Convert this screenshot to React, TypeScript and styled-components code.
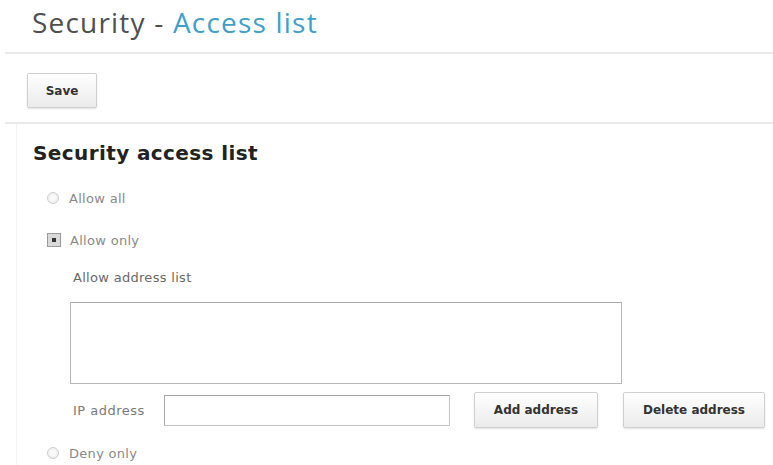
import styled, { createGlobalStyle } from 'styled-components';

const GlobalStyle = createGlobalStyle`
  html, body {
    margin: 0;
    padding: 0;
    background: #ffffff;
  }
  body {
    font-family: 'DejaVu Sans', Verdana, sans-serif;
    color: #555;
  }
`;

const Page = styled.div`
  width: 773px;
  height: 465px;
  overflow: hidden;
  background: #fff;
`;

const Header = styled.header`
  box-sizing: border-box;
  height: 52px;
  padding: 5px 0 0 32px;
`;

const Title = styled.h1`
  margin: 0;
  font-family: 'Open Sans', 'Noto Sans', sans-serif;
  font-weight: 400;
  font-size: 28px;
  line-height: 34px;
  color: #505050;
  letter-spacing: 1.2px;
`;

const TitleAccent = styled.span`
  color: #41a0ca;
`;

const Rule = styled.hr`
  margin: 0 0 0 5px;
  border: 0;
  height: 2px;
  background: #e9e9e9;
`;

const Toolbar = styled.div`
  box-sizing: border-box;
  height: 68px;
  padding: 19px 0 0 27px;
`;

const Button = styled.button<{ $width: number }>`
  width: ${(p) => p.$width}px;
  height: ${(p) => (p.$width < 80 ? 35 : 36)}px;
  padding: 0;
  border: 1px solid #d0d0d0;
  border-radius: 2px;
  background: linear-gradient(#ffffff, #ebebeb);
  box-shadow: 0 1px 2px rgba(0, 0, 0, 0.12);
  font-family: 'DejaVu Sans', Verdana, sans-serif;
  font-weight: 700;
  font-size: 12px;
  color: #333;
  cursor: pointer;
`;

const Section = styled.section`
  margin-left: 16px;
  padding: 17px 0 20px 16px;
  border-left: 1px solid #f3f3f3;
  display: flex;
  flex-direction: column;
`;

const Heading = styled.h2`
  margin: 0 0 23px;
  font-family: 'DejaVu Sans', Verdana, sans-serif;
  font-weight: 700;
  font-size: 20px;
  line-height: 24px;
  letter-spacing: 0.4px;
  color: #222;
`;

const Option = styled.label<{ $gap?: number }>`
  display: flex;
  align-items: center;
  height: 20px;
  margin-top: ${(p) => p.$gap ?? 0}px;
  padding-left: 14px;
  font-size: 13px;
  letter-spacing: 0.3px;
  color: #8a8a8a;
`;

const Radio = styled.span`
  width: 10px;
  height: 10px;
  margin-right: 10px;
  border: 1px solid #cfcfcf;
  border-radius: 50%;
  background: radial-gradient(circle, #fafafa 30%, #e6e6e6 100%);
`;

const CheckedBox = styled.span`
  width: 12px;
  height: 12px;
  margin-right: 9px;
  border: 1px solid #9a9a9a;
  background: #dadada;
  display: flex;
  align-items: center;
  justify-content: center;

  &::after {
    content: '';
    width: 4px;
    height: 4px;
    background: #333;
  }
`;

const Nested = styled.div`
  padding-left: 38px;
  display: flex;
  flex-direction: column;
`;

const FieldLabel = styled.div`
  height: 20px;
  line-height: 20px;
  margin: 18px 0 14px 2px;
  font-size: 13px;
  letter-spacing: 0.3px;
  color: #6a6a6a;
`;

const AddressList = styled.textarea`
  box-sizing: border-box;
  width: 552px;
  height: 82px;
  margin: 0 0 0 -1px;
  border: 1px solid #b8b8b8;
  border-top-color: #a8a8a8;
  resize: none;
  background: #fff;
`;

const InputRow = styled.div`
  display: flex;
  align-items: center;
  height: 36px;
  margin-top: 8px;
`;

const InputLabel = styled.span`
  width: 91px;
  padding-left: 2px;
  font-size: 13px;
  letter-spacing: 0.5px;
  color: #7a7a7a;
`;

const TextInput = styled.input`
  box-sizing: border-box;
  width: 286px;
  height: 31px;
  margin: 0 24px 0 0;
  border: 1px solid #c4c4c4;
  border-top-color: #a4a4a4;
  border-left-color: #aaaaaa;
  background: #fff;
`;

const ButtonGap = styled.span`
  width: 25px;
`;

export default function App() {
  return (
    <Page>
      <GlobalStyle />
      <Header>
        <Title>
          Security - <TitleAccent>Access list</TitleAccent>
        </Title>
      </Header>
      <Rule />
      <Toolbar>
        <Button $width={70}>Save</Button>
      </Toolbar>
      <Rule />
      <Section>
        <Heading>Security access list</Heading>
        <Option>
          <Radio />
          Allow all
        </Option>
        <Option $gap={22}>
          <CheckedBox />
          Allow only
        </Option>
        <Nested>
          <FieldLabel>Allow address list</FieldLabel>
          <AddressList />
          <InputRow>
            <InputLabel>IP address</InputLabel>
            <TextInput />
            <Button $width={124}>Add address</Button>
            <ButtonGap />
            <Button $width={142}>Delete address</Button>
          </InputRow>
        </Nested>
        <Option $gap={15}>
          <Radio />
          Deny only
        </Option>
      </Section>
    </Page>
  );
}
